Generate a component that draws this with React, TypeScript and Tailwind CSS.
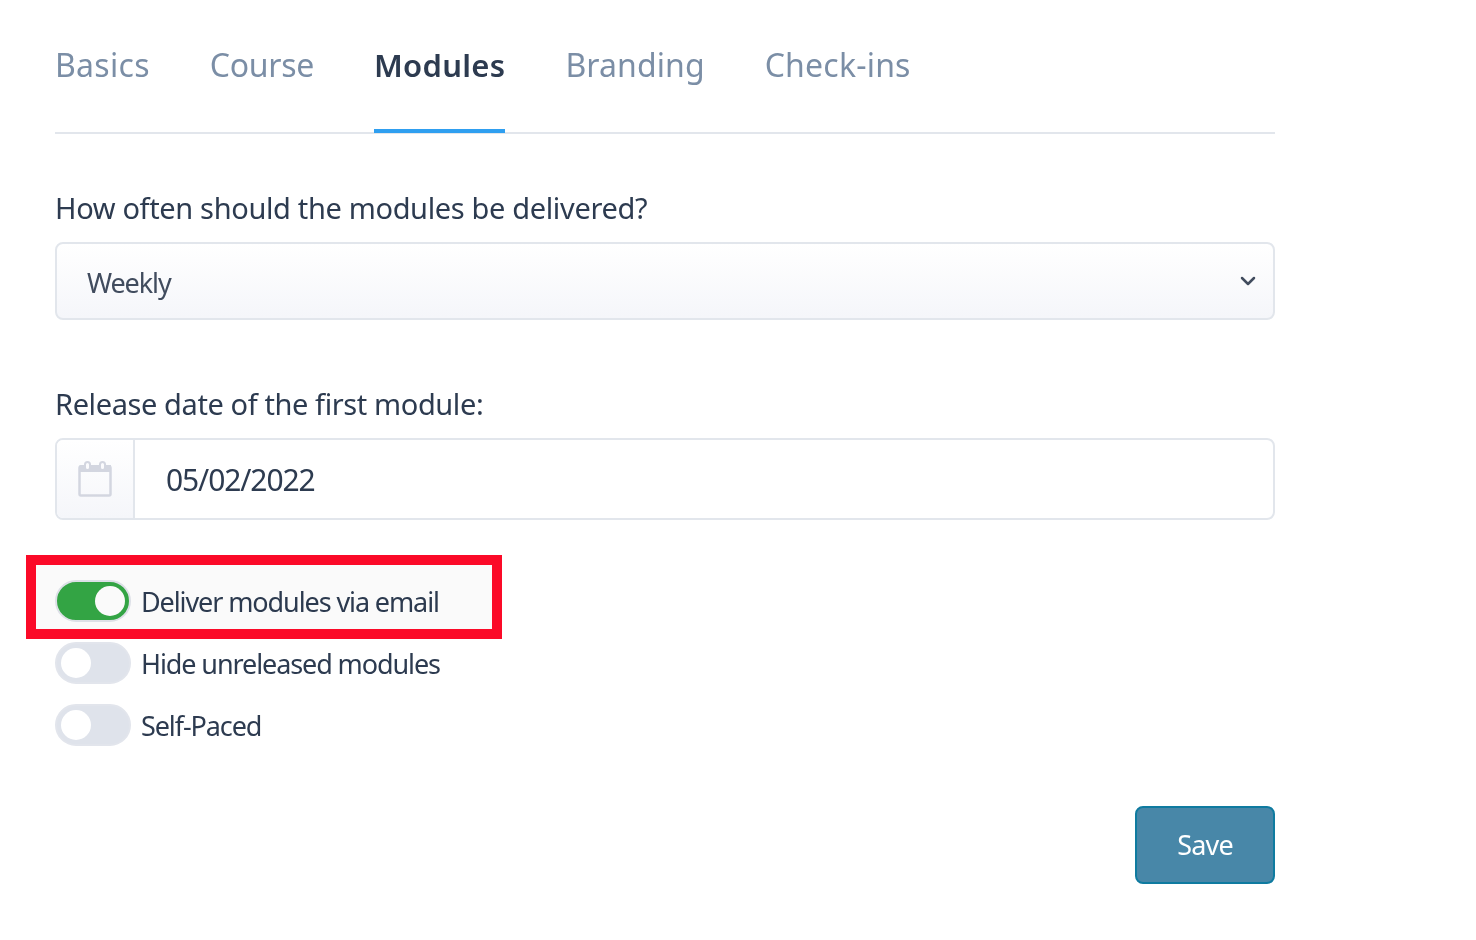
import { ChevronDown } from 'lucide-react';

const tabs = [
  { label: 'Basics', spacing: 'tracking-[0.3px]' },
  { label: 'Course', spacing: 'tracking-[-0.3px]' },
  { label: 'Modules', spacing: 'tracking-[0.3px]' },
  { label: 'Branding', spacing: 'tracking-[0.1px]' },
  { label: 'Check-ins', spacing: 'tracking-[0.2px]' },
];
const toggles = [
  { label: 'Deliver modules via email', on: true },
  { label: 'Hide unreleased modules', on: false },
  { label: 'Self-Paced', on: false },
];

function CalendarIcon() {
  return (
    <svg width="34" height="36" viewBox="0 0 34 36" fill="none">
      <rect x="1.5" y="5.5" width="31" height="29" rx="1.5" stroke="#d3d6e0" strokeWidth="2.5" />
      <path d="M1 11V5.5A1.5 1.5 0 0 1 2.5 4H33V11Z" fill="#d3d6e0" />
      <rect x="7" y="1" width="5" height="8" rx="2.5" fill="#fbfbfd" stroke="#d3d6e0" strokeWidth="2" />
      <rect x="22" y="1" width="5" height="8" rx="2.5" fill="#fbfbfd" stroke="#d3d6e0" strokeWidth="2" />
    </svg>
  );
}

function Toggle({ on }: { on: boolean }) {
  return (
    <div
      className={`flex h-[42px] w-[76px] shrink-0 items-center rounded-full border-[2px] border-[#e2e5ec] px-[4px] ${
        on ? 'justify-end bg-[#34a745]' : 'justify-start bg-[#dfe3eb]'
      }`}
    >
      <div className="h-[30px] w-[30px] rounded-full bg-white" />
    </div>
  );
}

export default function App() {
  return (
    <div className="relative h-[940px] w-[1476px] overflow-hidden bg-white font-['Noto_Sans',sans-serif] text-[#2d3b50]">
      <div className="ml-[55px] w-[1220px]">
        {/* Tabs */}
        <div className="flex h-[134px] gap-[60px] border-b-2 border-[#e2e6ec] pt-[42px]">
          {tabs.map((tab) => (
            <div
              key={tab.label}
              className={`h-[91px] leading-[46px] ${tab.spacing} ${
                tab.label === 'Modules'
                  ? 'border-b-[4px] border-[#2f9ff0] text-[31px] font-semibold text-[#2d3b50]'
                  : 'text-[32px] text-[#7b8ea6]'
              }`}
            >
              {tab.label}
            </div>
          ))}
        </div>

        <div className="mt-[52px] text-[29px] leading-[44px] tracking-[-0.35px]">How often should the modules be delivered?</div>
        <div className="mt-[12px] flex h-[78px] items-center justify-between rounded-[8px] border-2 border-[#e2e6ec] bg-gradient-to-b from-white to-[#f5f6fa] pl-[30px] pr-[13px] text-[27px] tracking-[-1.1px] text-[#414c5e]">
          <span className="pt-[4px]">Weekly</span>
          <ChevronDown size={24} strokeWidth={2.5} className="text-[#414c5e]" />
        </div>

        <div className="mt-[62px] text-[29px] leading-[44px] tracking-[-0.4px]">Release date of the first module:</div>
        <div className="mt-[12px] flex h-[82px] overflow-hidden rounded-[8px] border-2 border-[#e2e6ec]">
          <div className="flex w-[78px] items-center justify-center border-r-2 border-[#e2e6ec] bg-gradient-to-b from-white to-[#f5f6fa]">
            <CalendarIcon />
          </div>
          <div className="flex items-center pl-[31px] text-[30px] tracking-[-1.1px]">05/02/2022</div>
        </div>

        {/* Toggles */}
        <div className="mt-[60px] flex flex-col gap-[20px]">
          {toggles.map((t) => (
            <div key={t.label} className="flex items-center gap-[10px] text-[27px] tracking-[-1.1px]">
              <Toggle on={t.on} />
              <span className="pt-[2px] leading-[40px]">{t.label}</span>
            </div>
          ))}
        </div>

        <div className="mt-[60px] flex justify-end">
          <button className="h-[78px] w-[140px] rounded-[8px] border-2 border-[#0f7ba0] bg-[#4887a8] pt-[1px] text-[27px] tracking-[-0.8px] text-white">
            Save
          </button>
        </div>
      </div>

      {/* Red highlight drawn over the first toggle */}
      <div className="pointer-events-none absolute left-[26px] top-[555px] h-[84px] w-[476px] border-[10px] border-[#fb0a28] bg-[#fafafa] mix-blend-multiply" />
    </div>
  );
}
